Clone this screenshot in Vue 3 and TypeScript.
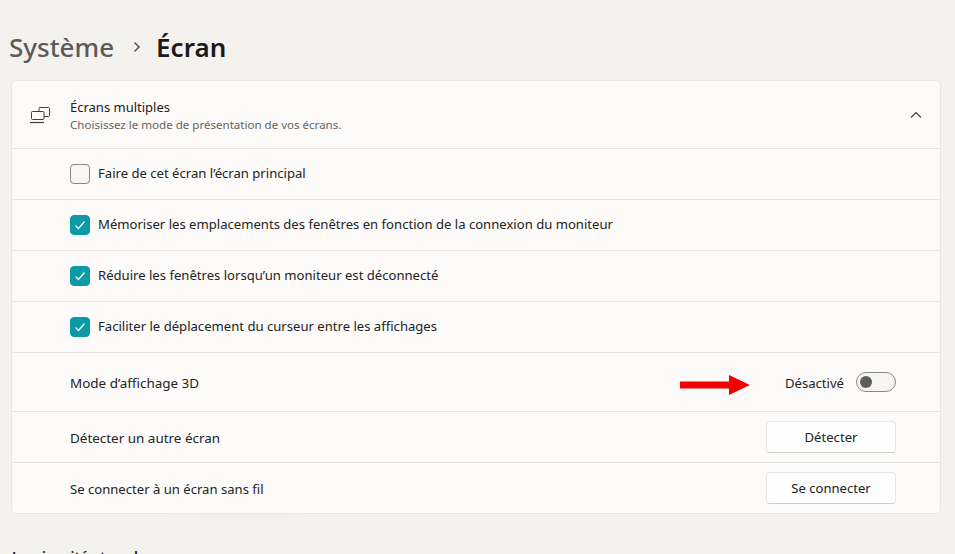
<script setup lang="ts">
interface CheckRow { label: string; checked: boolean }
const checks: CheckRow[] = [
  { label: 'Faire de cet écran l’écran principal', checked: false },
  { label: 'Mémoriser les emplacements des fenêtres en fonction de la connexion du moniteur', checked: true },
  { label: 'Réduire les fenêtres lorsqu’un moniteur est déconnecté', checked: true },
  { label: 'Faciliter le déplacement du curseur entre les affichages', checked: true },
]
</script>

<template>
  <div class="page">
    <h1 class="crumbs">
      <span class="parent">Système</span>
      <svg class="sep" width="10" height="12" viewBox="0 0 10 12"><path d="M2.5 1.5 L7 6 L2.5 10.5" fill="none" stroke="#5f5c5a" stroke-width="1.6" /></svg>
      <span class="current">Écran</span>
    </h1>

    <section class="card">
      <header class="head">
        <svg class="mon" width="22" height="18" viewBox="0 0 22 18" fill="none" stroke="#3f3f3f" stroke-width="1">
          <path d="M10 5 V2.5 a1 1 0 0 1 1 -1 H19.5 a1 1 0 0 1 1 1 V9.5 a1 1 0 0 1 -1 1 H15" />
          <rect x="2.5" y="5.5" width="12.5" height="8" rx="1" />
          <path d="M1 16.5 H15" stroke-width="1.2" />
        </svg>
        <div class="head-text">
          <div class="title">Écrans multiples</div>
          <div class="sub">Choisissez le mode de présentation de vos écrans.</div>
        </div>
        <svg class="chev" width="12" height="8" viewBox="0 0 12 8"><path d="M1 6.5 L6 1.5 L11 6.5" fill="none" stroke="#3a3a3a" stroke-width="1.1" /></svg>
      </header>

      <div v-for="c in checks" :key="c.label" class="row check-row">
        <span class="box" :class="{ on: c.checked }">
          <svg v-if="c.checked" width="12" height="10" viewBox="0 0 12 10"><path d="M1.5 5.5 L4.5 8.5 L10.5 1.5" fill="none" stroke="#fff" stroke-width="1.2" /></svg>
        </span>
        <span class="label">{{ c.label }}</span>
      </div>

      <div class="row toggle-row">
        <span class="label wide">Mode d’affichage 3D</span>
        <span class="spacer"></span>
        <svg class="arrow" width="70" height="20" viewBox="0 0 70 20"><path d="M0 6.5 H49 V0 L70 10 L49 20 V13.5 H0 Z" fill="#f00000" /></svg>
        <span class="label state">Désactivé</span>
        <span class="switch"><span class="knob"></span></span>
      </div>

      <div class="row btn-row">
        <span class="label wide">Détecter un autre écran</span>
        <span class="spacer"></span>
        <button class="btn" type="button">Détecter</button>
      </div>

      <div class="row btn-row">
        <span class="label low">Se connecter à un écran sans fil</span>
        <span class="spacer"></span>
        <button class="btn" type="button">Se connecter</button>
      </div>
    </section>

    <h2 class="next">Luminosité et couleur</h2>
  </div>
</template>

<style>
html, body { margin: 0; overflow: hidden; }
</style>

<style scoped>
.page {
  width: 955px;
  height: 554px;
  overflow: hidden;
  box-sizing: border-box;
  padding: 27px 14px 0 11px;
  background: linear-gradient(100deg, #f3f2ee 0%, #f5f1ec 50%, #f5f2ec 100%);
  font-family: "Noto Sans", "Open Sans", sans-serif;
  color: #1c1c1c;
}
.crumbs {
  display: flex;
  align-items: center;
  height: 40px;
  margin: 0 0 13px -2px;
  font-size: 26px;
  font-weight: 500;
  line-height: 40px;
}
.parent { color: #5d5a58; }
.sep { margin: 0 14px 0 18px; }
.current { color: #1c1a19; font-weight: 600; }
.card {
  box-sizing: border-box;
  height: 434px;
  background: #fcfbfa;
  border: 1px solid #e9e7e3;
  border-radius: 5px;
}
.head {
  display: flex;
  align-items: center;
  height: 67px;
  padding: 0 18px 0 17px;
  border-bottom: 1px solid #e6e4e1;
}
.mon { flex: none; margin-top: 1px; }
.head-text { flex: 1; margin-left: 19px; padding-top: 1px; }
.title { font-size: 13px; line-height: 18px; margin-bottom: 1px; color: #222; }
.sub { font-size: 11.55px; line-height: 16px; color: #66635f; }
.row {
  display: flex;
  align-items: center;
  padding: 0 44px 0 58px;
  border-bottom: 1px solid #e6e4e1;
}
.row:last-child { border-bottom: none; }
.check-row { height: 50px; }
.check-row .label { margin-bottom: 2px; }
.toggle-row { height: 58px; }
.btn-row { height: 50px; }
.label { font-size: 13.1px; color: #232323; }
.wide { font-size: 13.45px; margin-top: 2px; }
.low { margin-top: 2px; }
.spacer { flex: 1; }
.box {
  flex: none;
  display: flex;
  align-items: center;
  justify-content: center;
  box-sizing: border-box;
  width: 20px;
  height: 20px;
  margin-right: 8px;
  border: 1px solid #8a8886;
  border-radius: 4px;
  background: #f7f6f4;
}
.box.on { background: #0a9aa8; border-color: #0a9aa8; }
.arrow { margin: 6px 35px 0 0; }
.state { margin: 2px 12px 0 0; }
.switch {
  box-sizing: border-box;
  display: flex;
  align-items: center;
  width: 40px;
  height: 20px;
  padding-left: 3px;
  border: 1px solid #8b8987;
  border-radius: 10px;
  background: #f6f5f3;
}
.knob { width: 12px; height: 12px; border-radius: 50%; background: #5c5c5c; }
.btn {
  box-sizing: border-box;
  width: 130px;
  height: 32px;
  background: #fefefe;
  border: 1px solid #e8e6e4;
  border-bottom-color: #cfcdcb;
  border-radius: 4px;
  font: inherit;
  font-size: 13.1px;
  color: #232323;
  padding: 0;
}
.next {
  margin: 33px 0 0 1px;
  font-size: 14px;
  font-weight: 600;
  line-height: 20px;
  color: #1c1c1c;
}
</style>
